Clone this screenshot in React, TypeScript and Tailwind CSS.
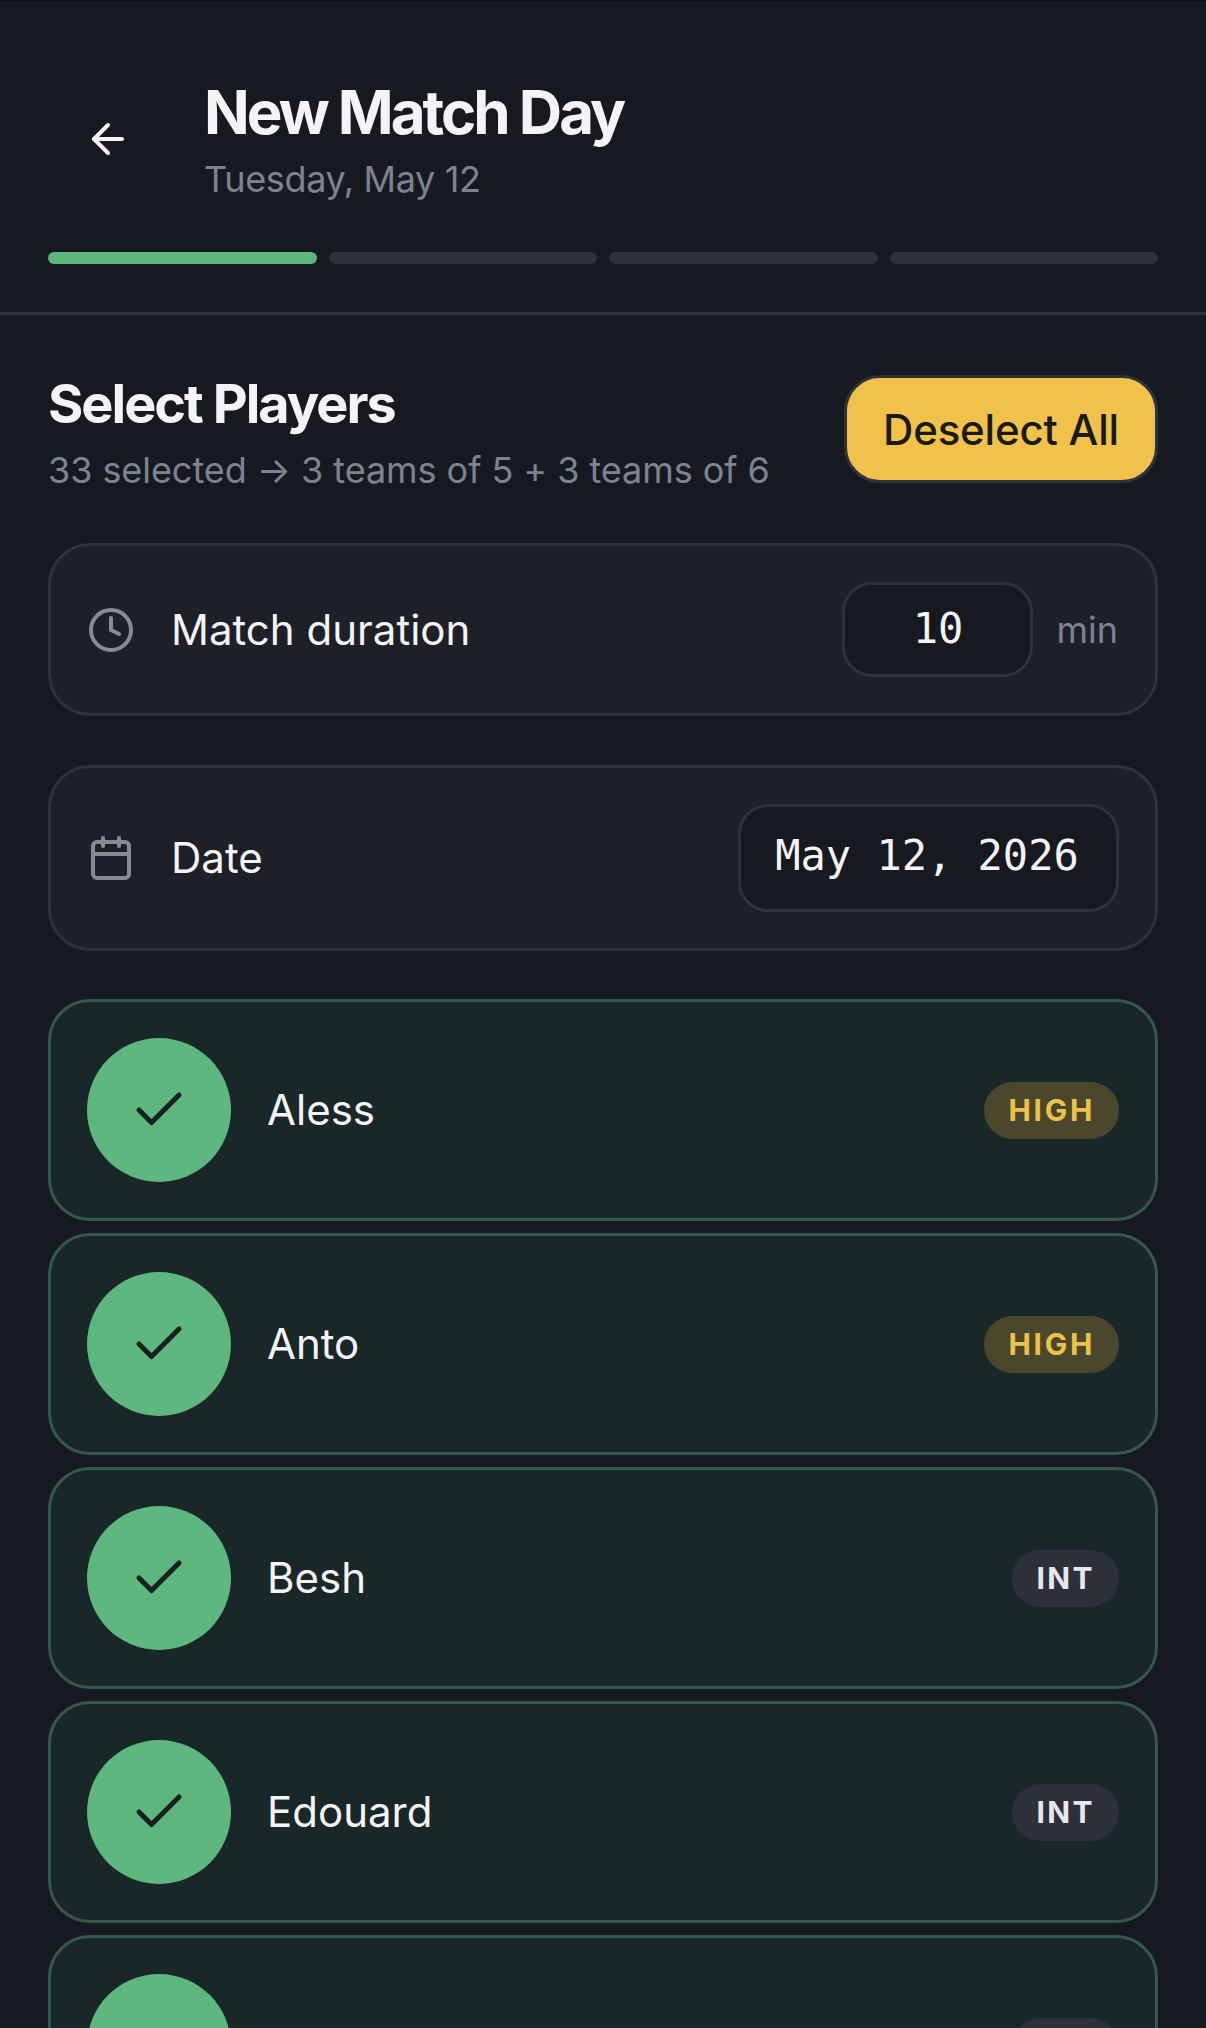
import React from 'react';
import { ArrowLeft, Calendar, Check, Clock } from 'lucide-react';

type Player = { name: string; level: 'HIGH' | 'INT' };

const players: Player[] = [
  { name: 'Aless', level: 'HIGH' },
  { name: 'Anto', level: 'HIGH' },
  { name: 'Besh', level: 'INT' },
  { name: 'Edouard', level: 'INT' },
  { name: '', level: 'INT' },
];

function PlayerRow({ player }: { player: Player }) {
  const high = player.level === 'HIGH';
  return (
    <div className="flex shrink-0 items-center gap-[36px] rounded-[42px] border-[3px] border-[#35584b] bg-[#1a2729] p-[36px]">
      <div className="flex h-[144px] w-[144px] shrink-0 items-center justify-center rounded-full bg-[#5db77f]">
        <Check className="h-[60px] w-[60px] text-[#16211f]" strokeWidth={2} />
      </div>
      <span className="flex-1 pb-[2px] text-[42px] text-[#f4f4f6]">{player.name}</span>
      <span
        className={
          high
            ? 'rounded-full bg-[#4a472c] px-[24px] py-[9px] text-[30px] leading-[39px] font-bold tracking-[2.7px] text-[#eec14a]'
            : 'rounded-full bg-[#2d303b] px-[24px] py-[9px] text-[30px] leading-[39px] font-bold tracking-[2.4px] text-[#e8e8ec]'
        }
      >
        {player.level}
      </span>
    </div>
  );
}

export default function App() {
  return (
    <div className="h-[2028px] w-[1206px] overflow-hidden border-t border-[#0b0e1a] bg-[#161a20] font-['Inter',sans-serif]">
      <header className="border-b-[3px] border-[#2e323c] px-[48px] pt-[74px] pb-[48px]">
        <div className="flex items-center gap-[36px]">
          <button className="flex h-[120px] w-[120px] items-center justify-center text-[#f4f4f6]">
            <ArrowLeft className="h-[48px] w-[48px]" strokeWidth={2} />
          </button>
          <div>
            <h1 className="text-[60px] leading-[75px] font-bold tracking-[-3px] text-[#f4f4f6]">New Match Day</h1>
            <p className="mt-[5px] text-[36px] leading-[48px] tracking-[-0.35px] text-[#7e8392]">Tuesday, May 12</p>
          </div>
        </div>
        <div className="mt-[49px] flex gap-[12px]">
          <div className="h-[12px] flex-1 rounded-[6px] bg-[#5db77f]" />
          <div className="h-[12px] flex-1 rounded-[6px] bg-[#2d313c]" />
          <div className="h-[12px] flex-1 rounded-[6px] bg-[#2d313c]" />
          <div className="h-[12px] flex-1 rounded-[6px] bg-[#2d313c]" />
        </div>
      </header>

      <main className="px-[48px] pt-[56px]">
        <div className="flex items-start justify-between">
          <div>
            <h2 className="text-[54px] leading-[66px] font-bold tracking-[-2px] text-[#f4f4f6]">Select Players</h2>
            <p className="mt-[9px] text-[36px] leading-[48px] tracking-[-0.06px] text-[#7e8392]">
              33 selected → 3 teams of 5 + 3 teams of 6
            </p>
          </div>
          <button className="mt-[4px] h-[108px] w-[314px] rounded-[36px] border-[3px] border-[#2e323c] bg-[#f0c14b] text-[42px] font-medium tracking-[-0.2px] text-[#1a1a12]">
            Deselect All
          </button>
        </div>

        <div className="mt-[49px] flex items-center gap-[36px] rounded-[42px] border-[3px] border-[#2e323c] bg-[#1d2027] p-[36px]">
          <Clock className="h-[48px] w-[48px] text-[#868b99]" strokeWidth={2} />
          <span className="flex-1 text-[42px] text-[#f4f4f6]">Match duration</span>
          <div className="flex h-[95px] w-[191px] items-center justify-center rounded-[30px] border-[3px] border-[#2e323c] bg-[#161a20] pb-[3px] font-['DejaVu_Sans_Mono',monospace] text-[42px] text-[#f4f4f6]">
            10
          </div>
          <span className="mr-[1px] ml-[-13px] text-[36px] text-[#7e8392]">min</span>
        </div>

        <div className="mt-[49px] flex items-center gap-[36px] rounded-[42px] border-[3px] border-[#2e323c] bg-[#1d2027] p-[36px]">
          <Calendar className="h-[48px] w-[48px] text-[#868b99]" strokeWidth={2} />
          <span className="flex-1 pb-[2px] text-[42px] text-[#f4f4f6]">Date</span>
          <div className="flex h-[108px] w-[381px] items-center justify-center rounded-[30px] border-[3px] border-[#2e323c] bg-[#161a20] pr-[3px] pb-[6px] font-['DejaVu_Sans_Mono',monospace] text-[42px] text-[#f4f4f6]">
            May 12, 2026
          </div>
        </div>

        <div className="mt-[48px] flex flex-col gap-[12px]">
          {players.map((player, i) => (
            <PlayerRow key={i} player={player} />
          ))}
        </div>
      </main>
    </div>
  );
}
